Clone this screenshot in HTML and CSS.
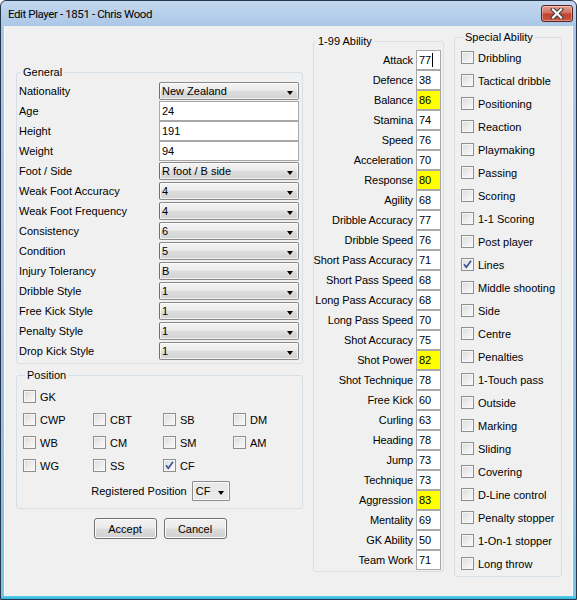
FILE: index.html
```html
<!DOCTYPE html>
<html>
<head>
<meta charset="utf-8">
<link rel="stylesheet" href="styles.css">
</head>
<body>
<div class="window">
  <div class="titlebar">
    <span class="title">Edit Player - 1851 - Chris Wood</span>
    <div class="close">
      <svg width="14" height="11" viewBox="0 0 14 11"><path d="M3 1.5 L11 9.5 M11 1.5 L3 9.5" stroke="#3a3a3a" stroke-width="4.2" stroke-linecap="square" fill="none"/><path d="M3 1.5 L11 9.5 M11 1.5 L3 9.5" stroke="#ffffff" stroke-width="2.2" stroke-linecap="square" fill="none"/></svg>
    </div>
  </div>
  <div class="client">
    <div class="col-left">
      <fieldset class="group general">
        <legend>General</legend>
        <div class="frow"><span class="lbl">Nationality</span><div class="combo"><span>New Zealand</span><i class="arrow"></i></div></div>
        <div class="frow"><span class="lbl">Age</span><div class="edit">24</div></div>
        <div class="frow"><span class="lbl">Height</span><div class="edit">191</div></div>
        <div class="frow"><span class="lbl">Weight</span><div class="edit">94</div></div>
        <div class="frow"><span class="lbl">Foot / Side</span><div class="combo"><span>R foot / B side</span><i class="arrow"></i></div></div>
        <div class="frow"><span class="lbl">Weak Foot Accuracy</span><div class="combo"><span>4</span><i class="arrow"></i></div></div>
        <div class="frow"><span class="lbl">Weak Foot Frequency</span><div class="combo"><span>4</span><i class="arrow"></i></div></div>
        <div class="frow"><span class="lbl">Consistency</span><div class="combo"><span>6</span><i class="arrow"></i></div></div>
        <div class="frow"><span class="lbl">Condition</span><div class="combo"><span>5</span><i class="arrow"></i></div></div>
        <div class="frow"><span class="lbl">Injury Tolerancy</span><div class="combo"><span>B</span><i class="arrow"></i></div></div>
        <div class="frow"><span class="lbl">Dribble Style</span><div class="combo"><span>1</span><i class="arrow"></i></div></div>
        <div class="frow"><span class="lbl">Free Kick Style</span><div class="combo"><span>1</span><i class="arrow"></i></div></div>
        <div class="frow"><span class="lbl">Penalty Style</span><div class="combo"><span>1</span><i class="arrow"></i></div></div>
        <div class="frow"><span class="lbl">Drop Kick Style</span><div class="combo"><span>1</span><i class="arrow"></i></div></div>
      </fieldset>
      <fieldset class="group position">
        <legend>Position</legend>
        <div class="pos-grid">
          <label class="chk pos-gk"><span class="cb"></span>GK</label>
          <label class="chk"><span class="cb"></span>CWP</label>
          <label class="chk"><span class="cb"></span>CBT</label>
          <label class="chk"><span class="cb"></span>SB</label>
          <label class="chk"><span class="cb"></span>DM</label>
          <label class="chk"><span class="cb"></span>WB</label>
          <label class="chk"><span class="cb"></span>CM</label>
          <label class="chk"><span class="cb"></span>SM</label>
          <label class="chk"><span class="cb"></span>AM</label>
          <label class="chk"><span class="cb"></span>WG</label>
          <label class="chk"><span class="cb"></span>SS</label>
          <label class="chk"><span class="cb checked"><svg width="11" height="11" viewBox="0 0 11 11"><path d="M2 5.2 L4.3 8.3 L9 1.8" stroke="#3d5699" stroke-width="1.7" fill="none"/></svg></span>CF</label>
        </div>
        <div class="reg-row">
          <span>Registered Position</span>
          <div class="combo small"><span>CF</span><i class="arrow"></i></div>
        </div>
      </fieldset>
      <div class="buttons">
        <div class="btn">Accept</div>
        <div class="btn">Cancel</div>
      </div>
    </div>

    <div class="col-mid">
      <fieldset class="group ability">
        <legend>1-99 Ability</legend>
        <div class="arow"><span>Attack</span><div class="aval">77<i class="caret"></i></div></div>
        <div class="arow"><span>Defence</span><div class="aval">38</div></div>
        <div class="arow"><span>Balance</span><div class="aval hi">86</div></div>
        <div class="arow"><span>Stamina</span><div class="aval">74</div></div>
        <div class="arow"><span>Speed</span><div class="aval">76</div></div>
        <div class="arow"><span>Acceleration</span><div class="aval">70</div></div>
        <div class="arow"><span>Response</span><div class="aval hi">80</div></div>
        <div class="arow"><span>Agility</span><div class="aval">68</div></div>
        <div class="arow"><span>Dribble Accuracy</span><div class="aval">77</div></div>
        <div class="arow"><span>Dribble Speed</span><div class="aval">76</div></div>
        <div class="arow"><span>Short Pass Accuracy</span><div class="aval">71</div></div>
        <div class="arow"><span>Short Pass Speed</span><div class="aval">68</div></div>
        <div class="arow"><span>Long Pass Accuracy</span><div class="aval">68</div></div>
        <div class="arow"><span>Long Pass Speed</span><div class="aval">70</div></div>
        <div class="arow"><span>Shot Accuracy</span><div class="aval">75</div></div>
        <div class="arow"><span>Shot Power</span><div class="aval hi">82</div></div>
        <div class="arow"><span>Shot Technique</span><div class="aval">78</div></div>
        <div class="arow"><span>Free Kick</span><div class="aval">60</div></div>
        <div class="arow"><span>Curling</span><div class="aval">63</div></div>
        <div class="arow"><span>Heading</span><div class="aval">78</div></div>
        <div class="arow"><span>Jump</span><div class="aval">73</div></div>
        <div class="arow"><span>Technique</span><div class="aval">73</div></div>
        <div class="arow"><span>Aggression</span><div class="aval hi">83</div></div>
        <div class="arow"><span>Mentality</span><div class="aval">69</div></div>
        <div class="arow"><span>GK Ability</span><div class="aval">50</div></div>
        <div class="arow"><span>Team Work</span><div class="aval">71</div></div>
      </fieldset>
    </div>

    <div class="col-right">
      <fieldset class="group special">
        <legend>Special Ability</legend>
        <label class="chk srow"><span class="cb"></span>Dribbling</label>
        <label class="chk srow"><span class="cb"></span>Tactical dribble</label>
        <label class="chk srow"><span class="cb"></span>Positioning</label>
        <label class="chk srow"><span class="cb"></span>Reaction</label>
        <label class="chk srow"><span class="cb"></span>Playmaking</label>
        <label class="chk srow"><span class="cb"></span>Passing</label>
        <label class="chk srow"><span class="cb"></span>Scoring</label>
        <label class="chk srow"><span class="cb"></span>1-1 Scoring</label>
        <label class="chk srow"><span class="cb"></span>Post player</label>
        <label class="chk srow"><span class="cb checked"><svg width="11" height="11" viewBox="0 0 11 11"><path d="M2 5.2 L4.3 8.3 L9 1.8" stroke="#3d5699" stroke-width="1.7" fill="none"/></svg></span>Lines</label>
        <label class="chk srow"><span class="cb"></span>Middle shooting</label>
        <label class="chk srow"><span class="cb"></span>Side</label>
        <label class="chk srow"><span class="cb"></span>Centre</label>
        <label class="chk srow"><span class="cb"></span>Penalties</label>
        <label class="chk srow"><span class="cb"></span>1-Touch pass</label>
        <label class="chk srow"><span class="cb"></span>Outside</label>
        <label class="chk srow"><span class="cb"></span>Marking</label>
        <label class="chk srow"><span class="cb"></span>Sliding</label>
        <label class="chk srow"><span class="cb"></span>Covering</label>
        <label class="chk srow"><span class="cb"></span>D-Line control</label>
        <label class="chk srow"><span class="cb"></span>Penalty stopper</label>
        <label class="chk srow"><span class="cb"></span>1-On-1 stopper</label>
        <label class="chk srow"><span class="cb"></span>Long throw</label>
      </fieldset>
    </div>
  </div>
  <div class="frame-bottom"></div>
</div>
</body>
</html>
```

FILE: styles.css
```css
html, body {
  margin: 0;
  padding: 0;
  background: #ffffff;
}
body {
  font-family: "Liberation Sans", Arial, sans-serif;
  font-size: 11px;
  color: #000;
}
.window {
  width: 577px;
  height: 600px;
  box-sizing: border-box;
  border: 1px solid #26374d;
  border-radius: 6px 6px 0 0;
  background: linear-gradient(to bottom, #c4d8ef 0px, #abc7e7 25px, #9dbde3 60%, #7cc4e6 100%);
  display: flex;
  flex-direction: column;
  overflow: hidden;
}
.titlebar {
  height: 25px;
  flex: none;
  display: flex;
  justify-content: space-between;
  align-items: flex-start;
  padding: 0 3px 0 7px;
}
.title {
  font-family: Roboto, "Liberation Sans", sans-serif;
  font-size: 11.5px;
  letter-spacing: -0.4px;
  line-height: 14px;
  margin-top: 6px;
  color: #000;
}
.close {
  width: 30px;
  height: 15px;
  margin-top: 4px;
  border: 1px solid #5b2424;
  border-radius: 3px;
  background: linear-gradient(to bottom, #e6a091 0%, #d36f60 45%, #c2422f 55%, #c9593c 100%);
  box-shadow: inset 0 0 0 1px rgba(255,255,255,0.35);
  display: flex;
  align-items: center;
  justify-content: center;
}
.client {
  flex: 1;
  margin: 0 3px;
  background: #f0f0f0;
  box-shadow: inset 1px 0 0 #fafcfe, inset -1px 0 0 #fafcfe;
  display: flex;
  align-items: flex-start;
  gap: 10px;
  padding-left: 12px;
}
.frame-bottom {
  height: 3px;
  flex: none;
  background: linear-gradient(to bottom, #5fd0ee, #2fb4e0);
}

/* group boxes */
.group {
  margin: 0;
  padding: 0;
  min-width: 0;
  border: 1px solid #d5dfe5;
  border-radius: 3px;
  box-sizing: border-box;
}
.group legend {
  padding: 0 2px;
  margin-left: 2px;
  line-height: 14px;
  font-size: 11px;
}

/* left column */
.col-left {
  width: 287px;
  margin-top: 39px;
  display: flex;
  flex-direction: column;
}
.general {
  width: 287px;
  padding: 2px 3px 2px 2px;
}
.frow {
  height: 20px;
  display: flex;
  align-items: center;
}
.lbl {
  flex: 1;
}
.combo {
  width: 140px;
  height: 18px;
  box-sizing: border-box;
  border: 1px solid #8a8a8a;
  border-left-color: #707070;
  border-radius: 2px;
  background: linear-gradient(to bottom, #f3f3f3 0%, #ececec 45%, #dedede 50%, #d2d2d2 100%);
  box-shadow: inset 0 0 0 1px rgba(255,255,255,0.7);
  display: flex;
  align-items: center;
  justify-content: space-between;
  padding-left: 2px;
  align-self: flex-start;
  margin-top: 1px;
}
.arrow {
  width: 0;
  height: 0;
  border-left: 3.5px solid transparent;
  border-right: 3.5px solid transparent;
  border-top: 4px solid #000;
  margin-right: 5px;
  margin-top: 4px;
}
.edit {
  width: 140px;
  height: 20px;
  box-sizing: border-box;
  border: 1px solid #a8a8a8;
  background: #fff;
  padding-left: 2px;
  display: flex;
  align-items: center;
}

.position {
  width: 287px;
  margin-top: 4px;
  padding: 3px 0 7px 6px;
}
.pos-grid {
  display: grid;
  grid-template-columns: repeat(4, 70px);
  grid-auto-rows: 23px;
}
.pos-gk {
  grid-column: 1 / -1;
}
.chk {
  display: flex;
  align-items: center;
  gap: 4px;
  white-space: nowrap;
}
.cb {
  width: 13px;
  height: 13px;
  box-sizing: border-box;
  border: 1px solid #8e8f8f;
  background: linear-gradient(135deg, #d9d9d9 0%, #ececec 50%, #fbfbfb 100%);
  box-shadow: inset 0 0 0 1px #f6f6f6;
  flex: none;
  display: flex;
  align-items: center;
  justify-content: center;
}
.reg-row {
  margin-top: 4px;
  height: 20px;
  display: flex;
  align-items: center;
  justify-content: center;
  gap: 5px;
  padding-right: 4px;
}
.combo.small {
  width: 38px;
  height: 20px;
  margin-top: 0;
  align-self: center;
  background: #e9e9e9;
  border-color: #8c8c8c;
  border-radius: 1px;
  padding-left: 3px;
}
.combo.small .arrow {
  margin-right: 5px;
  margin-top: 3px;
}
.buttons {
  margin-top: 9px;
  display: flex;
  justify-content: center;
  gap: 7px;
  padding-left: 1px;
}
.btn {
  width: 63px;
  height: 21px;
  box-sizing: border-box;
  border: 1px solid #707070;
  border-radius: 3px;
  background: linear-gradient(to bottom, #f2f2f2 0%, #ebebeb 48%, #dddddd 52%, #cfcfcf 100%);
  box-shadow: inset 0 0 0 1px #fbfbfb;
  display: flex;
  align-items: center;
  justify-content: center;
}

/* middle column */
.col-mid {
  width: 131px;
  margin-top: 8px;
}
.ability {
  width: 131px;
  padding: 2px 2px 1px 0;
}
.arow {
  height: 20px;
  display: flex;
  align-items: center;
  justify-content: flex-end;
  gap: 3px;
}
.arow span {
  white-space: nowrap;
  flex: none;
  letter-spacing: -0.1px;
}
.aval {
  width: 25px;
  height: 20px;
  flex: none;
  box-sizing: border-box;
  border: 1px solid #a8a8a8;
  background: #fff;
  padding-left: 2px;
  display: flex;
  align-items: center;
}
.aval.hi {
  background: #ffff00;
}
.caret {
  display: inline-block;
  width: 1px;
  height: 14px;
  background: #000;
  margin-left: 1px;
}

/* right column */
.col-right {
  width: 108px;
  margin-top: 4px;
}
.special {
  width: 108px;
  padding: 2px 0 1px 6px;
}
.srow {
  height: 23px;
}
```
